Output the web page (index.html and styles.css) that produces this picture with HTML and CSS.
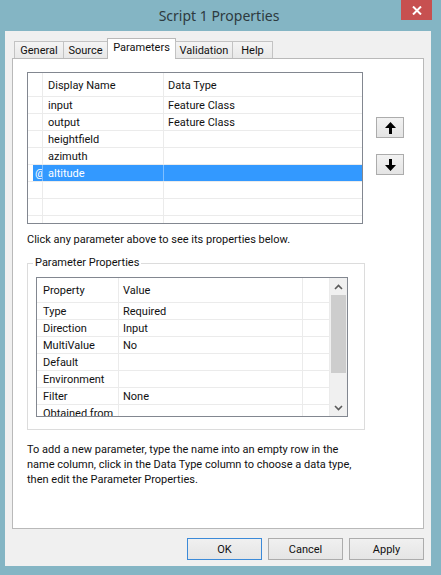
FILE: index.html
```html
<!DOCTYPE html>
<html lang="en">
<head>
<meta charset="utf-8">
<title>Script 1 Properties</title>
<link rel="stylesheet" href="styles.css">
</head>
<body>
<div class="window">
  <div class="titlebar">
    <span class="title">Script 1 Properties</span>
    <button class="close" aria-label="Close">
      <svg width="10" height="9" viewBox="0 0 10 9"><path d="M1 0.5 L9 8.5 M9 0.5 L1 8.5" stroke="#fff" stroke-width="2" fill="none"/></svg>
    </button>
  </div>

  <div class="client">
    <div class="tabs">
      <div class="tab tab-general">General</div>
      <div class="tab tab-source">Source</div>
      <div class="tab tab-params active">Parameters</div>
      <div class="tab tab-validation">Validation</div>
      <div class="tab tab-help">Help</div>
    </div>

    <div class="panel">
      <div class="param-row">
        <div class="plist">
          <div class="row head">
            <div class="cell rh"></div>
            <div class="cell">Display Name</div>
            <div class="cell last">Data Type</div>
          </div>
          <div class="row">
            <div class="cell rh"></div>
            <div class="cell">input</div>
            <div class="cell last">Feature Class</div>
          </div>
          <div class="row">
            <div class="cell rh"></div>
            <div class="cell">output</div>
            <div class="cell last">Feature Class</div>
          </div>
          <div class="row">
            <div class="cell rh"></div>
            <div class="cell">heightfield</div>
            <div class="cell last"></div>
          </div>
          <div class="row">
            <div class="cell rh"></div>
            <div class="cell">azimuth</div>
            <div class="cell last"></div>
          </div>
          <div class="row selected">
            <div class="cell rh"><span class="mark">@</span></div>
            <div class="cell">altitude</div>
            <div class="cell last"></div>
          </div>
          <div class="row">
            <div class="cell rh"></div>
            <div class="cell"></div>
            <div class="cell last"></div>
          </div>
          <div class="row">
            <div class="cell rh"></div>
            <div class="cell"></div>
            <div class="cell last"></div>
          </div>
          <div class="row">
            <div class="cell rh"></div>
            <div class="cell"></div>
            <div class="cell last"></div>
          </div>
        </div>

        <div class="movers">
          <button class="mover" aria-label="Move up">
            <svg width="11" height="12" viewBox="0 0 11 12"><path d="M5.5 0 L11 6 H7 V12 H4 V6 H0 Z" fill="#000"/></svg>
          </button>
          <button class="mover" aria-label="Move down">
            <svg width="11" height="12" viewBox="0 0 11 12"><path d="M5.5 12 L11 6 H7 V0 H4 V6 H0 Z" fill="#000"/></svg>
          </button>
        </div>
      </div>

      <p class="hint">Click any parameter above to see its properties below.</p>

      <fieldset class="group">
        <legend>Parameter Properties</legend>
        <div class="props">
          <div class="props-body">
            <div class="prow head">
              <div class="cell">Property</div>
              <div class="cell">Value</div>
              <div class="cell"></div>
            </div>
            <div class="prow"><div class="cell">Type</div><div class="cell">Required</div><div class="cell"></div></div>
            <div class="prow"><div class="cell">Direction</div><div class="cell">Input</div><div class="cell"></div></div>
            <div class="prow"><div class="cell">MultiValue</div><div class="cell">No</div><div class="cell"></div></div>
            <div class="prow"><div class="cell">Default</div><div class="cell"></div><div class="cell"></div></div>
            <div class="prow"><div class="cell">Environment</div><div class="cell"></div><div class="cell"></div></div>
            <div class="prow"><div class="cell">Filter</div><div class="cell">None</div><div class="cell"></div></div>
            <div class="prow"><div class="cell">Obtained from</div><div class="cell"></div><div class="cell"></div></div>
          </div>
          <div class="vscroll">
            <div class="sb-arrow">
              <svg width="9" height="6" viewBox="0 0 9 6"><path d="M1 5 L4.5 1.5 L8 5" stroke="#5a5a5a" stroke-width="1.6" fill="none"/></svg>
            </div>
            <div class="sb-thumb"></div>
            <div class="sb-track"></div>
            <div class="sb-arrow">
              <svg width="9" height="6" viewBox="0 0 9 6"><path d="M1 1 L4.5 4.5 L8 1" stroke="#5a5a5a" stroke-width="1.6" fill="none"/></svg>
            </div>
          </div>
        </div>
      </fieldset>

      <p class="note">To add a new parameter, type the name into an empty row in the<br>name column, click in the Data Type column to choose a data type,<br>then edit the Parameter Properties.</p>
    </div>

    <div class="actions">
      <button class="btn default">OK</button>
      <button class="btn">Cancel</button>
      <button class="btn">Apply</button>
    </div>
  </div>
</div>
</body>
</html>
```

FILE: styles.css
```css
* {
  box-sizing: border-box;
}

html,
body {
  margin: 0;
}

body {
  width: 441px;
  height: 575px;
  overflow: hidden;
  background: #84b5c4;
  font-family: Roboto, "Noto Sans", "Segoe UI", sans-serif;
  font-size: 11px;
  color: #111;
}

button {
  font: inherit;
  color: inherit;
}

.window {
  width: 441px;
  height: 575px;
  display: flex;
  flex-direction: column;
}

/* Title bar */
.titlebar {
  position: relative;
  height: 31px;
  display: flex;
  align-items: center;
  justify-content: center;
}

.title {
  font-family: "Noto Sans", sans-serif;
  font-size: 14px;
  color: #2d3a40;
  padding-right: 3px;
}

.close {
  position: absolute;
  top: 0;
  right: 9px;
  width: 31px;
  height: 20px;
  padding: 0;
  border: 0;
  background: #c75050;
  display: flex;
  align-items: center;
  justify-content: center;
}

/* Dialog client area */
.client {
  margin-left: 5px;
  width: 426px;
  height: 535px;
  background: #f0f0f0;
  padding: 7px 7px 0 7px;
  display: flex;
  flex-direction: column;
}

/* Tab strip */
.tabs {
  position: relative;
  z-index: 1;
  height: 20px;
  padding-left: 2px;
  display: flex;
  align-items: flex-end;
}

.tab {
  height: 17px;
  margin-right: -1px;
  border: 1px solid #c3c3c3;
  border-bottom: 0;
  background: linear-gradient(#f4f4f4, #e8e8e8);
  text-align: center;
  line-height: 17px;
  white-space: nowrap;
}

.tab.active {
  height: 21px;
  margin-bottom: -1px;
  border-color: #b9b9b9;
  background: #fff;
  line-height: 18px;
}

.tab-general { width: 50px; }
.tab-source { width: 45px; }
.tab-params { width: 69px; }
.tab-validation { width: 58px; }
.tab-help { width: 41px; }

/* Tab page */
.panel {
  height: 471px;
  background: #fff;
  border: 1px solid #b9b9b9;
  padding: 13px 0 0 14px;
}

.param-row {
  display: flex;
  gap: 13px;
}

/* Parameter list grid */
.plist {
  width: 336px;
  height: 152px;
  border: 1px solid #828790;
  overflow: hidden;
}

.row {
  display: grid;
  grid-template-columns: 15px 121px 198px;
  height: 17px;
  border-bottom: 1px solid #ebebeb;
}

.row.head {
  height: 24px;
}

.cell {
  padding-left: 5px;
  padding-top: 1px;
  border-right: 1px solid #ebebeb;
  white-space: nowrap;
  overflow: hidden;
  display: flex;
  align-items: center;
}

.cell.last {
  border-right: 0;
  padding-left: 4px;
}

.cell.rh {
  padding-left: 5px;
  padding-top: 0;
  align-items: stretch;
}

.row.selected .cell {
  background: #3399ff;
  color: #fff;
  border-right-color: #7fbfff;
}

.row.selected .cell.rh {
  background: #fff;
}

.mark {
  flex: 1;
  background: #3399ff;
  color: #fff;
  padding: 1px 0 0 2px;
  overflow: hidden;
  display: flex;
  align-items: center;
}

.movers {
  padding-top: 45px;
  display: flex;
  flex-direction: column;
  gap: 16px;
}

.mover {
  width: 28px;
  height: 21px;
  padding: 0;
  border: 1px solid #acacac;
  background: linear-gradient(#f2f2f2, #e4e4e4);
  display: flex;
  align-items: center;
  justify-content: center;
}

.hint {
  margin: 8px 0 0;
  line-height: 16px;
}

/* Parameter Properties group */
.group {
  margin: 7px 0 0;
  width: 338px;
  min-width: 0;
  border: 1px solid #dcdcdc;
  padding: 6px 8px 12px 8px;
}

.group legend {
  margin-left: -3px;
  padding: 0 2px;
  line-height: 16px;
}

.props {
  width: 312px;
  height: 140px;
  border: 1px solid #828790;
  display: flex;
  overflow: hidden;
}

.props-body {
  width: 293px;
}

.prow {
  display: grid;
  grid-template-columns: 82px 184px 27px;
  height: 17px;
  border-bottom: 1px solid #ebebeb;
}

.prow.head {
  height: 25px;
}

.prow .cell {
  padding-left: 6px;
}

.prow .cell:nth-child(2) {
  padding-left: 4px;
}

.vscroll {
  width: 17px;
  display: flex;
  flex-direction: column;
  background: #f0f0f0;
}

.sb-arrow {
  height: 17px;
  display: flex;
  align-items: center;
  justify-content: center;
}

.sb-thumb {
  height: 78px;
  margin: 0 1px;
  background: #cdcdcd;
}

.sb-track {
  flex: 1;
}

.note {
  margin: 12px 0 0;
  line-height: 15px;
  white-space: nowrap;
}

/* Dialog buttons */
.actions {
  margin-top: 9px;
  display: flex;
  justify-content: flex-end;
  gap: 6px;
}

.btn {
  width: 75px;
  height: 22px;
  padding: 0;
  border: 1px solid #acacac;
  background: linear-gradient(#f0f0f0, #e5e5e5);
}

.btn.default {
  border-color: #3c8ad8;
}
```
